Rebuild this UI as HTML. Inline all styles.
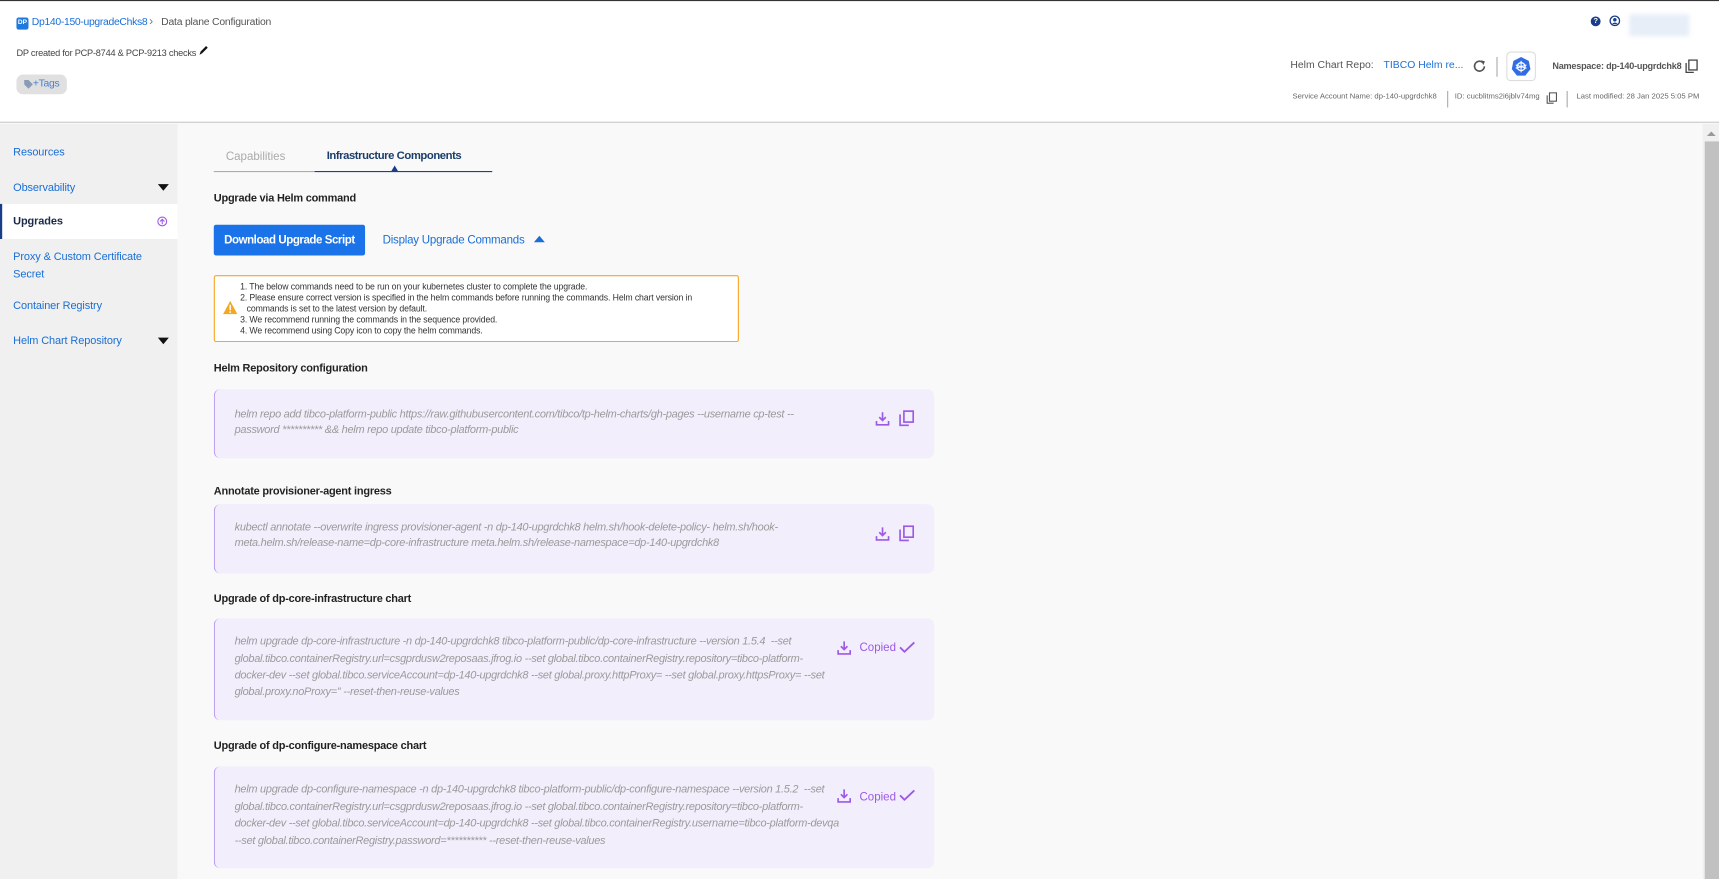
<!DOCTYPE html>
<html><head><meta charset="utf-8"><style>
html,body{margin:0;padding:0;width:1719px;height:879px;overflow:hidden;background:#f9f9f9}
#w{position:absolute;left:0;top:0;width:1568px;height:802px;transform:scale(1.0963);transform-origin:0 0;font-family:"Liberation Sans",sans-serif;background:#f9f9f9}
.a{position:absolute;white-space:nowrap}
.hd{position:absolute;left:0;top:0;width:1568px;height:112px;background:#fff;border-top:1px solid #333;border-bottom:1px solid #c8c8c8;box-sizing:border-box}
.sb{position:absolute;left:0;top:113px;width:162px;height:689px;background:#f0f0f0}
.si{position:absolute;left:12px;font-size:10px;color:#1a6fd6;letter-spacing:-0.1px}
.arr{position:absolute;left:144px;width:0;height:0;border-left:5px solid transparent;border-right:5px solid transparent;border-top:6px solid #111}
.h{position:absolute;left:195px;font-size:10px;font-weight:bold;color:#222;letter-spacing:-0.2px}
.box{position:absolute;left:195px;width:657px;background:#f3eefc;border-left:1px solid #b99af0;border-radius:6px;box-sizing:border-box}
.cmd{position:absolute;left:18px;font-size:10px;font-style:italic;color:#9a9a9a;letter-spacing:-0.25px;white-space:nowrap}
.ic{position:absolute}
.cp{position:absolute;font-size:10.5px;color:#9b59e6}
.wt{position:absolute;left:23px;font-size:7.95px;color:#333;white-space:nowrap;letter-spacing:-0.1px}
</style></head><body><div id="w">
<div class="hd">
<div class="a" style="left:15px;top:15px;width:11px;height:11px;background:#1f7ae0;border-radius:2px;color:#fff;font-size:6px;font-weight:bold;line-height:11px;text-align:center">DP</div>
<div class="a" style="left:29px;top:14px;font-size:9.5px;color:#1a6fd6;letter-spacing:-0.3px">Dp140-150-upgradeChks8</div>
<div class="a" style="left:136px;top:13px;font-size:11px;color:#777">›</div>
<div class="a" style="left:147px;top:14px;font-size:9.5px;color:#555;letter-spacing:-0.2px">Data plane Configuration</div>
<div class="a" style="left:15px;top:42px;font-size:8.4px;color:#444;letter-spacing:-0.2px">DP created for PCP-8744 &amp; PCP-9213 checks</div>
<svg class="a" style="left:181px;top:40px" width="9" height="10" viewBox="0 0 9 10"><path d="M1 9 L2 6 L7 1 L8.5 2.5 L3.5 7.5 Z" fill="#111"/></svg>
<div class="a" style="left:15px;top:67px;width:46px;height:18px;background:#e0e0e0;border-radius:6px"></div>
<svg class="a" style="left:22px;top:72px" width="8" height="8" viewBox="0 0 8 8"><path d="M0 0H4L8 4L4 8L0 4Z" fill="#8a9bb5"/></svg>
<div class="a" style="left:30px;top:70px;font-size:9.5px;color:#4a7fd0;letter-spacing:-0.3px">+Tags</div>
<div class="a" style="left:1451px;top:14px;width:9px;height:9px;border-radius:50%;background:#1a3d8a;color:#fff;font-size:7px;line-height:9px;text-align:center;font-weight:bold">?</div>
<svg class="a" style="left:1468px;top:13px" width="10" height="10" viewBox="0 0 10 10"><circle cx="5" cy="5" r="4.3" fill="none" stroke="#1a3d8a" stroke-width="1.2"/><circle cx="5" cy="4" r="1.6" fill="#1a3d8a"/><path d="M2.3 8 Q5 5 7.7 8" fill="#1a3d8a"/></svg>
<div class="a" style="left:1486px;top:12px;width:55px;height:20px;background:#e8eef8;filter:blur(2px)"></div>
<div class="a" style="left:1177px;top:53px;font-size:9.5px;color:#555">Helm Chart Repo:</div>
<div class="a" style="left:1262px;top:53px;font-size:9.5px;color:#1a6fd6">TIBCO Helm re...</div>
<svg class="a" style="left:1343px;top:53px" width="13" height="13" viewBox="0 0 13 13"><path d="M11 6.5 A4.5 4.5 0 1 1 9.5 3" fill="none" stroke="#555" stroke-width="1.5"/><path d="M8 1 L11.5 2 L10 5.5Z" fill="#555"/></svg>
<div class="a" style="left:1365px;top:51px;width:1px;height:18px;background:#aaa"></div>
<div class="a" style="left:1374px;top:46px;width:27px;height:27px;border:1px solid #ddd;border-radius:4px;box-sizing:border-box;background:#fff"></div>
<svg class="a" style="left:1378px;top:50px" width="19" height="19" viewBox="0 0 19 19"><path d="M9.5 1 L16.5 4.5 L18 12 L13.3 18 H5.7 L1 12 L2.5 4.5Z" fill="#326ce5"/><circle cx="9.5" cy="9.8" r="3.6" fill="none" stroke="#fff" stroke-width="1.2"/><path d="M9.5 4.5V15M4.6 8.3L14.4 11.3M14.4 8.3L4.6 11.3" stroke="#fff" stroke-width="1"/></svg>
<div class="a" style="left:1416px;top:54px;font-size:8.3px;font-weight:bold;color:#555;letter-spacing:-0.2px">Namespace: dp-140-upgrdchk8</div>
<svg class="a" style="left:1537px;top:53px" width="12" height="13" viewBox="0 0 12 13"><rect x="3.5" y="0.8" width="7.5" height="9" fill="none" stroke="#444" stroke-width="1.2"/><path d="M1 3.5V12H8" fill="none" stroke="#444" stroke-width="1.2"/></svg>
<div class="a" style="left:1179px;top:84px;font-size:7px;color:#666">Service Account Name: dp-140-upgrdchk8</div>
<div class="a" style="left:1320px;top:82px;width:1px;height:15px;background:#aaa"></div>
<div class="a" style="left:1327px;top:84px;font-size:7px;color:#666">ID: cucblitms2i6jblv74mg</div>
<svg class="a" style="left:1410px;top:83px" width="11" height="11" viewBox="0 0 12 13"><rect x="3.5" y="0.8" width="7.5" height="9" fill="none" stroke="#555" stroke-width="1.2"/><path d="M1 3.5V12H8" fill="none" stroke="#555" stroke-width="1.2"/></svg>
<div class="a" style="left:1429px;top:82px;width:1px;height:15px;background:#aaa"></div>
<div class="a" style="left:1438px;top:84px;font-size:7px;color:#666">Last modified: 28 Jan 2025 5:05 PM</div>
</div>

<div class="sb">
<div class="si" style="top:21px">Resources</div>
<div class="si" style="top:53px">Observability</div><div class="arr" style="top:55px"></div>
<div class="a" style="left:0;top:73px;width:162px;height:32px;background:#fff;border-left:2px solid #1a3d8a;box-sizing:border-box"></div>
<div class="si" style="top:84px;color:#1a2a4a;font-weight:bold">Upgrades</div>
<svg class="a" style="left:143px;top:84px" width="10" height="10" viewBox="0 0 10 10"><circle cx="5" cy="5" r="4" fill="none" stroke="#9b59e6" stroke-width="1"/><path d="M5 7.5V3M3 5L5 3L7 5" fill="none" stroke="#9b59e6" stroke-width="1"/></svg>
<div class="si" style="top:114px;line-height:16px">Proxy &amp; Custom Certificate<br>Secret</div>
<div class="si" style="top:161px">Container Registry</div>
<div class="si" style="top:193px">Helm Chart Repository</div><div class="arr" style="top:195px"></div>
</div>

<div class="a" style="left:1553px;top:113px;width:15px;height:689px;background:#f0f0f0"></div>
<div class="a" style="left:1557px;top:120px;width:0;height:0;border-left:4px solid transparent;border-right:4px solid transparent;border-bottom:4px solid #999"></div>
<div class="a" style="left:1555px;top:129px;width:13px;height:673px;background:#c1c1c1"></div>

<div class="a" style="left:206px;top:137px;font-size:10.5px;color:#aaa">Capabilities</div>
<div class="a" style="left:298px;top:137px;font-size:10.3px;color:#1a3d6a;font-weight:bold;letter-spacing:-0.4px">Infrastructure Components</div>
<div class="a" style="left:195px;top:156px;width:92px;height:1px;background:#aaa"></div>
<div class="a" style="left:287px;top:156px;width:162px;height:1px;background:#1a3d8a"></div>
<div class="a" style="left:357px;top:151px;width:0;height:0;border-left:3.5px solid transparent;border-right:3.5px solid transparent;border-bottom:5px solid #1a3d8a"></div>

<div class="h" style="top:176px">Upgrade via Helm command</div>
<div class="a" style="left:195px;top:205px;width:138px;height:28px;background:#1a73e8;border-radius:2px;color:#fff;font-size:10.5px;font-weight:bold;line-height:28px;text-align:center;letter-spacing:-0.4px">Download Upgrade Script</div>
<div class="a" style="left:349px;top:213px;font-size:10.5px;color:#1a6fd6;letter-spacing:-0.2px">Display Upgrade Commands</div>
<div class="a" style="left:487px;top:215px;width:0;height:0;border-left:5px solid transparent;border-right:5px solid transparent;border-bottom:6px solid #1a6fd6"></div>

<div class="a" style="left:195px;top:251px;width:479px;height:61px;background:#fff;border:1px solid #f5a623;border-radius:2px;box-sizing:border-box">
<svg class="a" style="left:7px;top:22px" width="14" height="13" viewBox="0 0 14 13"><path d="M7 0.5L13.5 12.5H0.5Z" fill="#f5a623"/><rect x="6.3" y="4" width="1.4" height="5" fill="#fff"/><rect x="6.3" y="10" width="1.4" height="1.4" fill="#fff"/></svg>
<div class="wt" style="top:5px">1. The below commands need to be run on your kubernetes cluster to complete the upgrade.</div>
<div class="wt" style="top:15px">2. Please ensure correct version is specified in the helm commands before running the commands. Helm chart version in</div>
<div class="wt" style="top:25px;left:29px">commands is set to the latest version by default.</div>
<div class="wt" style="top:35px">3. We recommend running the commands in the sequence provided.</div>
<div class="wt" style="top:45px">4. We recommend using Copy icon to copy the helm commands.</div>
</div>

<div class="h" style="top:331px">Helm Repository configuration</div>
<div class="box" style="top:355px;height:63px">
<div class="cmd" style="top:18px">helm repo add tibco-platform-public https://raw.githubusercontent.com/tibco/tp-helm-charts/gh-pages --username cp-test --</div>
<div class="cmd" style="top:32px">password ********** &amp;&amp; helm repo update tibco-platform-public</div>
<svg class="ic" style="left:602px;top:20px" width="14" height="14" viewBox="0 0 14 14"><path d="M7 1V8M4 5.5L7 8.5L10 5.5M1.5 9V12.5H12.5V9" fill="none" stroke="#9b59e6" stroke-width="1.5"/></svg>
<svg class="ic" style="left:624px;top:19px" width="14" height="15" viewBox="0 0 14 15"><rect x="4.5" y="1" width="8.5" height="10" fill="none" stroke="#9b59e6" stroke-width="1.5"/><path d="M1 4V14H9" fill="none" stroke="#9b59e6" stroke-width="1.5"/></svg>
</div>

<div class="h" style="top:443px">Annotate provisioner-agent ingress</div>
<div class="box" style="top:460px;height:63px">
<div class="cmd" style="top:16px">kubectl annotate --overwrite ingress provisioner-agent -n dp-140-upgrdchk8 helm.sh/hook-delete-policy- helm.sh/hook-</div>
<div class="cmd" style="top:30px">meta.helm.sh/release-name=dp-core-infrastructure meta.helm.sh/release-namespace=dp-140-upgrdchk8</div>
<svg class="ic" style="left:602px;top:20px" width="14" height="14" viewBox="0 0 14 14"><path d="M7 1V8M4 5.5L7 8.5L10 5.5M1.5 9V12.5H12.5V9" fill="none" stroke="#9b59e6" stroke-width="1.5"/></svg>
<svg class="ic" style="left:624px;top:19px" width="14" height="15" viewBox="0 0 14 15"><rect x="4.5" y="1" width="8.5" height="10" fill="none" stroke="#9b59e6" stroke-width="1.5"/><path d="M1 4V14H9" fill="none" stroke="#9b59e6" stroke-width="1.5"/></svg>
</div>

<div class="h" style="top:541px">Upgrade of dp-core-infrastructure chart</div>
<div class="box" style="top:564px;height:93px">
<div class="cmd" style="top:16px">helm upgrade dp-core-infrastructure -n dp-140-upgrdchk8 tibco-platform-public/dp-core-infrastructure --version 1.5.4 &nbsp;--set</div>
<div class="cmd" style="top:32px">global.tibco.containerRegistry.url=csgprdusw2reposaas.jfrog.io --set global.tibco.containerRegistry.repository=tibco-platform-</div>
<div class="cmd" style="top:47px">docker-dev --set global.tibco.serviceAccount=dp-140-upgrdchk8 --set global.proxy.httpProxy= --set global.proxy.httpsProxy= --set</div>
<div class="cmd" style="top:62px">global.proxy.noProxy='' --reset-then-reuse-values</div>
<svg class="ic" style="left:567px;top:20px" width="14" height="14" viewBox="0 0 14 14"><path d="M7 1V8M4 5.5L7 8.5L10 5.5M1.5 9V12.5H12.5V9" fill="none" stroke="#9b59e6" stroke-width="1.5"/></svg>
<div class="cp" style="left:588px;top:21px">Copied</div>
<svg class="ic" style="left:624px;top:21px" width="15" height="11" viewBox="0 0 15 11"><path d="M1 5.5L5 9.5L14 1" fill="none" stroke="#9b59e6" stroke-width="1.7"/></svg>
</div>

<div class="h" style="top:675px">Upgrade of dp-configure-namespace chart</div>
<div class="box" style="top:699px;height:93px">
<div class="cmd" style="top:16px">helm upgrade dp-configure-namespace -n dp-140-upgrdchk8 tibco-platform-public/dp-configure-namespace --version 1.5.2 &nbsp;--set</div>
<div class="cmd" style="top:32px">global.tibco.containerRegistry.url=csgprdusw2reposaas.jfrog.io --set global.tibco.containerRegistry.repository=tibco-platform-</div>
<div class="cmd" style="top:47px">docker-dev --set global.tibco.serviceAccount=dp-140-upgrdchk8 --set global.tibco.containerRegistry.username=tibco-platform-devqa</div>
<div class="cmd" style="top:63px">--set global.tibco.containerRegistry.password=********** --reset-then-reuse-values</div>
<svg class="ic" style="left:567px;top:20px" width="14" height="14" viewBox="0 0 14 14"><path d="M7 1V8M4 5.5L7 8.5L10 5.5M1.5 9V12.5H12.5V9" fill="none" stroke="#9b59e6" stroke-width="1.5"/></svg>
<div class="cp" style="left:588px;top:22px">Copied</div>
<svg class="ic" style="left:624px;top:21px" width="15" height="11" viewBox="0 0 15 11"><path d="M1 5.5L5 9.5L14 1" fill="none" stroke="#9b59e6" stroke-width="1.7"/></svg>
</div>
</div></body></html>
